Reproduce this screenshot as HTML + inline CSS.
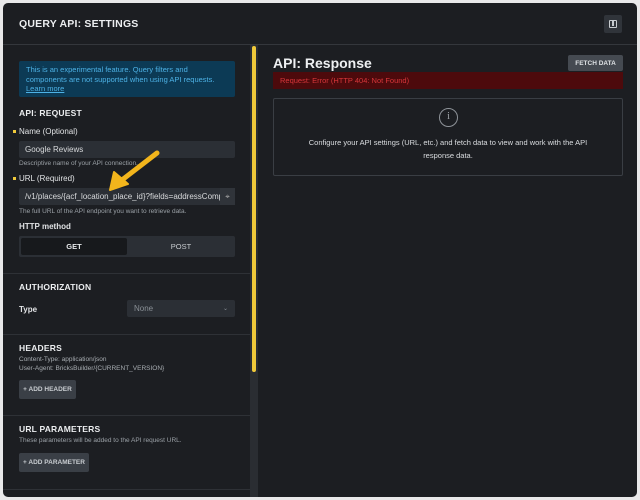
<!DOCTYPE html>
<html><head><meta charset="utf-8"><style>
*{box-sizing:border-box;margin:0;padding:0}
body{width:640px;height:500px;background:#e9e9ea;font-family:"Liberation Sans",sans-serif;position:relative;overflow:hidden;color:#e4e6e8}
.p{position:absolute;left:3px;top:3px;width:634px;height:494px;background:#1c1e22;border-radius:5px;overflow:hidden}
.a{position:absolute;white-space:nowrap}
.h{font-weight:bold;font-size:8.5px;letter-spacing:.2px;color:#eceef0}
.l{font-size:8px;color:#e0e2e4}
.s{font-size:6.5px;color:#9aa0a6}
.in{position:absolute;background:#2b2f35;border-radius:2px;font-size:8px;color:#d8dadc;padding-left:6px;display:flex;align-items:center}
.hr{position:absolute;left:0;width:247px;height:1px;background:#2e3136}
.btn{position:absolute;background:#3a3f46;border-radius:2px;font-size:6.5px;font-weight:bold;color:#c9cdd1;display:flex;align-items:center;justify-content:center}
.dot{position:absolute;width:3px;height:3px;background:#f0c93a;left:10px}
</style></head><body>
<div class="p">
<div class="a h" style="left:16px;top:15px;font-size:10.5px">QUERY API: SETTINGS</div>
<div style="position:absolute;left:601px;top:12px;width:18px;height:18px;background:#30343a;border-radius:2px"></div>
<div style="position:absolute;left:606px;top:17px;width:8px;height:8px;border:1.3px solid #c8ccd0;border-radius:1px"></div>
<div style="position:absolute;left:609px;top:18px;width:2px;height:5px;background:#c8ccd0"></div>
<div style="position:absolute;left:0;top:41px;width:634px;height:1px;background:#34373c"></div>

<div style="position:absolute;left:16px;top:58px;width:216px;height:36px;background:#0c3a55;border-radius:2px"></div>
<div class="a" style="left:23px;top:62px;font-size:7.5px;line-height:9.5px;color:#4db2e6">This is an experimental feature. Query filters and<br>components are not supported when using API requests.<br><span style="text-decoration:underline">Learn more</span></div>
<div class="a h" style="left:16px;top:105px">API: REQUEST</div>
<div class="dot" style="top:127px"></div>
<div class="a l" style="left:16px;top:124px">Name (Optional)</div>
<div class="in" style="left:16px;top:138px;width:216px;height:17px">Google Reviews</div>
<div class="a s" style="left:16px;top:157px">Descriptive name of your API connection.</div>
<div class="dot" style="top:174px"></div>
<div class="a l" style="left:16px;top:171px">URL (Required)</div>
<div class="in" style="left:16px;top:185px;width:216px;height:17px;overflow:hidden">/v1/places/{acf_location_place_id}?fields=addressComp</div>
<div style="position:absolute;left:217px;top:185px;width:15px;height:17px;background:#30343a;color:#aaa;font-size:8px;text-align:center;line-height:17px">⌖</div>
<div class="a s" style="left:16px;top:205px">The full URL of the API endpoint you want to retrieve data.</div>
<div class="a l" style="left:16px;top:219px;font-weight:bold">HTTP method</div>
<div style="position:absolute;left:16px;top:233px;width:216px;height:21px;background:#2b2f35;border-radius:2px"></div>
<div style="position:absolute;left:18px;top:235px;width:106px;height:17px;background:#17191c;border-radius:2px;font-size:7.5px;font-weight:bold;color:#e6e8ea;text-align:center;line-height:17px">GET</div>
<div class="a" style="left:124px;top:235px;width:108px;text-align:center;line-height:17px;font-size:7.5px;color:#c8ccd0">POST</div>
<div class="hr" style="top:270px"></div>
<div class="a h" style="left:16px;top:279px">AUTHORIZATION</div>
<div class="a l" style="left:16px;top:302px;font-weight:bold">Type</div>
<div class="in" style="left:124px;top:297px;width:108px;height:17px;color:#8a9096;padding-left:7px">None<span style="position:absolute;right:7px;font-size:6px">⌄</span></div>
<div class="hr" style="top:331px"></div>
<div class="a h" style="left:16px;top:340px">HEADERS</div>
<div class="a s" style="left:16px;top:352px;line-height:9px;color:#a8adb2">Content-Type: application/json<br>User-Agent: BricksBuilder/{CURRENT_VERSION}</div>
<div class="btn" style="left:16px;top:377px;width:57px;height:19px">+ ADD HEADER</div>
<div class="hr" style="top:412px"></div>
<div class="a h" style="left:16px;top:421px">URL PARAMETERS</div>
<div class="a s" style="left:16px;top:434px">These parameters will be added to the API request URL.</div>
<div class="btn" style="left:16px;top:450px;width:70px;height:19px">+ ADD PARAMETER</div>
<div class="hr" style="top:486px"></div>

<div style="position:absolute;left:247px;top:42px;width:8px;height:452px;background:#2a2d32"></div>
<div style="position:absolute;left:249px;top:43px;width:4px;height:326px;background:#f0c93a;border-radius:2px"></div>

<div class="a" style="left:270px;top:52px;font-size:14px;font-weight:bold;color:#eef0f2">API: Response</div>
<div class="btn" style="left:565px;top:52px;width:55px;height:16px;background:#454a51;color:#dfe2e5">FETCH DATA</div>
<div style="position:absolute;left:270px;top:69px;width:350px;height:17px;background:#4d0a0c"></div>
<div class="a" style="left:277px;top:73px;font-size:7.5px;color:#d8363a">Request: Error (HTTP 404: Not Found)</div>
<div style="position:absolute;left:270px;top:95px;width:350px;height:78px;border:1px solid #3a3e44;border-radius:2px"></div>
<div style="position:absolute;left:436px;top:105px;width:19px;height:19px;border:1.3px solid #8e9399;border-radius:50%;color:#a0a5aa;font-size:10px;text-align:center;line-height:16px;font-family:'Liberation Serif',serif">i</div>
<div class="a" style="left:270px;top:133px;width:350px;text-align:center;font-size:7.5px;line-height:13px;color:#dadde0;white-space:normal">Configure your API settings (URL, etc.) and fetch data to view and work with the API<br>response data.</div>
</div>
<svg style="position:absolute;left:0;top:0" width="640" height="500"><line x1="157" y1="153" x2="122" y2="180" stroke="#f2b51c" stroke-width="5" stroke-linecap="round"/><polygon points="110,190 114,172 128,184" fill="#f2b51c" stroke="#f2b51c" stroke-width="2" stroke-linejoin="round"/></svg>
</body></html>
